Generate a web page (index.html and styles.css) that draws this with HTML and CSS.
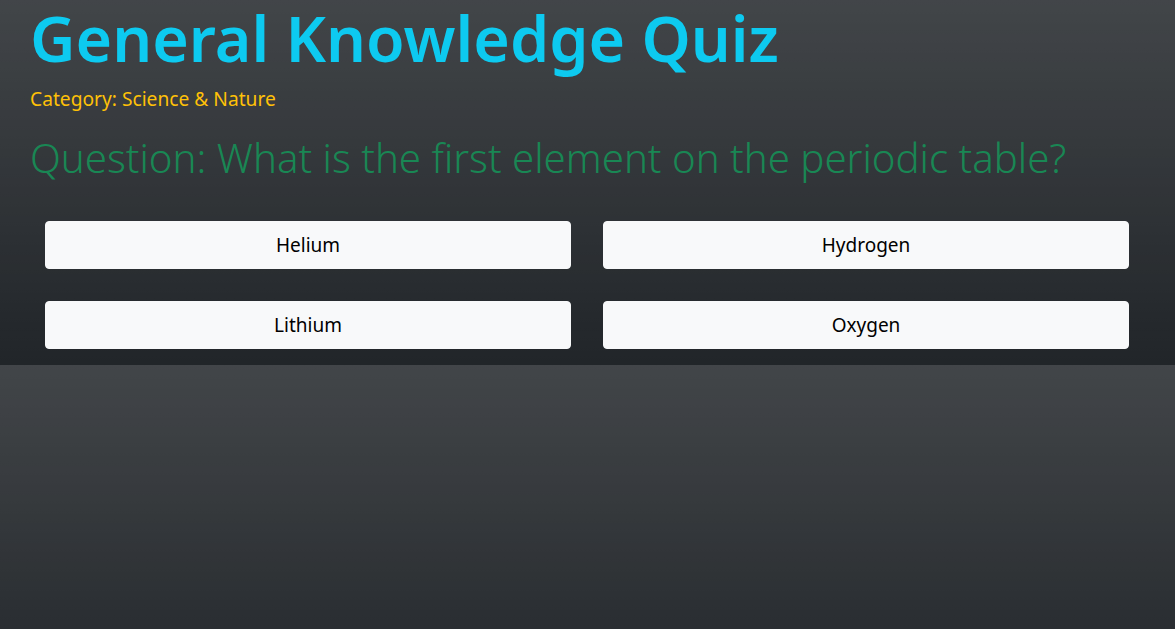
FILE: index.html
```html
<!DOCTYPE html>
<html lang="en">
<head>
<meta charset="utf-8">
<title>General Knowledge Quiz</title>
<link rel="stylesheet" href="styles.css">
</head>
<body>
<main class="quiz">
  <header class="quiz-head">
    <h1 class="quiz-title">General Knowledge Quiz</h1>
    <p class="quiz-category">Category: Science &amp; Nature</p>
    <h2 class="quiz-question">Question: What is the first element on the periodic table?</h2>
  </header>
  <div class="answers">
    <button class="answer" type="button">Helium</button>
    <button class="answer" type="button">Hydrogen</button>
    <button class="answer" type="button">Lithium</button>
    <button class="answer" type="button">Oxygen</button>
  </div>
</main>
</body>
</html>
```

FILE: styles.css
```css
body {
  margin: 0;
  background-color: #212529;
  background-image: linear-gradient(180deg, rgba(255,255,255,0.15), rgba(255,255,255,0));
  font-family: "Noto Sans", "Open Sans", sans-serif;
}
.quiz {
  padding: 0 46px 16px 30px;
}
.quiz-head {
  display: flex;
  flex-direction: column;
}
.quiz-title {
  margin: 0;
  font-size: 62.7px;
  font-weight: 600;
  line-height: 76px;
  color: #0dcaf0;
}
.quiz-category {
  margin: 9px 0 0;
  font-size: 19.2px;
  line-height: 27px;
  color: #ffc107;
}
.quiz-question {
  margin: 22px 0 0;
  font-size: 40.2px;
  font-weight: 300;
  line-height: 48px;
  color: #198754;
}
.answers {
  display: grid;
  grid-template-columns: 1fr 1fr;
  gap: 32px;
  margin: 39px 0 0 15px;
}
.answer {
  height: 48px;
  padding: 0 16px;
  border: 1px solid #f8f9fa;
  border-radius: 4px;
  background: #f8f9fa;
  color: #000;
  font-family: inherit;
  font-size: 19px;
  text-align: center;
}
```
